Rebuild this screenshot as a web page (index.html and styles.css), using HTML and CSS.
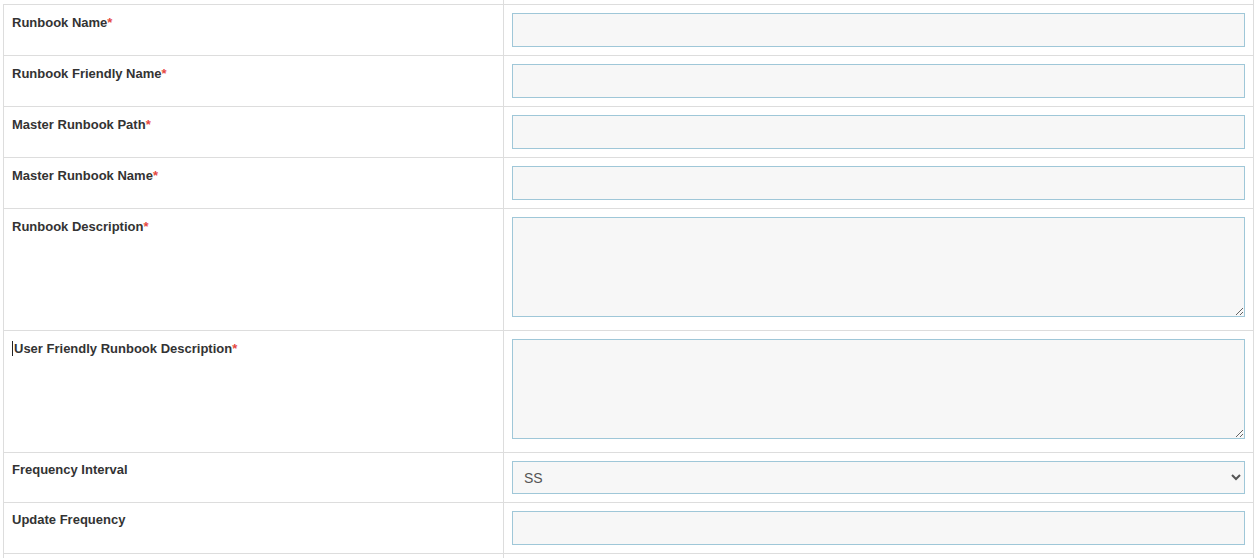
FILE: index.html
```html
<!DOCTYPE html>
<html lang="en">
<head>
<meta charset="utf-8">
<title>Runbook form</title>
<link rel="stylesheet" href="styles.css">
</head>
<body>
<div class="page">
  <table class="form-table">
    <colgroup><col class="col-label"><col class="col-field"></colgroup>
    <tr class="edge-row edge-top"><td></td><td></td></tr>
    <tr>
      <td class="label">Runbook Name<span class="req">*</span></td>
      <td class="field"><input class="control" type="text"></td>
    </tr>
    <tr>
      <td class="label">Runbook Friendly Name<span class="req">*</span></td>
      <td class="field"><input class="control" type="text"></td>
    </tr>
    <tr>
      <td class="label">Master Runbook Path<span class="req">*</span></td>
      <td class="field"><input class="control" type="text"></td>
    </tr>
    <tr>
      <td class="label">Master Runbook Name<span class="req">*</span></td>
      <td class="field"><input class="control" type="text"></td>
    </tr>
    <tr>
      <td class="label">Runbook Description<span class="req">*</span></td>
      <td class="field"><textarea class="control area"></textarea></td>
    </tr>
    <tr>
      <td class="label"><span class="caret"></span>User Friendly Runbook Description<span class="req">*</span></td>
      <td class="field"><textarea class="control area"></textarea></td>
    </tr>
    <tr>
      <td class="label label-optional">Frequency Interval</td>
      <td class="field"><select class="control select"><option>SS</option><option>MM</option><option>HH</option></select></td>
    </tr>
    <tr>
      <td class="label label-optional">Update Frequency</td>
      <td class="field"><input class="control" type="text"></td>
    </tr>
    <tr class="edge-row edge-bottom"><td></td><td></td></tr>
  </table>
</div>
</body>
</html>
```
FILE: styles.css
```css
html, body {
  margin: 0;
  padding: 0;
  background: #ffffff;
}

body {
  font-family: "Liberation Sans", Arial, Helvetica, sans-serif;
  font-size: 13px;
  color: #333333;
  overflow: hidden;
}

.page {
  padding-left: 3px;
}

.form-table {
  border-collapse: collapse;
  border: none;
  width: 1251px;
  table-layout: fixed;
}

.col-label {
  width: 500px;
}

.form-table td {
  border: 1px solid #dddddd;
  padding: 8px;
  vertical-align: top;
}

.label {
  font-weight: bold;
  line-height: 20px;
  color: #333333;
}

.form-table td.label-optional {
  padding-top: 7px;
}

.req {
  color: #e5483f;
  font-weight: bold;
}

.caret {
  display: inline-block;
  width: 1px;
  height: 15px;
  background: #222222;
  vertical-align: -3px;
  margin-right: 1px;
}

.control {
  display: block;
  box-sizing: border-box;
  width: 100%;
  height: 34px;
  margin: 0;
  border: 1px solid #9fc7d8;
  border-radius: 0;
  background: #f7f7f7;
  font-family: "Liberation Sans", Arial, Helvetica, sans-serif;
  font-size: 14px;
  color: #555555;
  padding: 6px 12px;
  outline: none;
}

.area {
  height: 100px;
  margin-bottom: 5px;
  resize: vertical;
}

.select {
  height: 33px;
  padding: 6px 7px;
}

.edge-row td {
  padding: 0;
  height: 4px;
}

.edge-top td {
  border-top: none;
}

.edge-top td:first-child {
  border-left: none;
}

.edge-bottom td {
  border-bottom: none;
}
```
